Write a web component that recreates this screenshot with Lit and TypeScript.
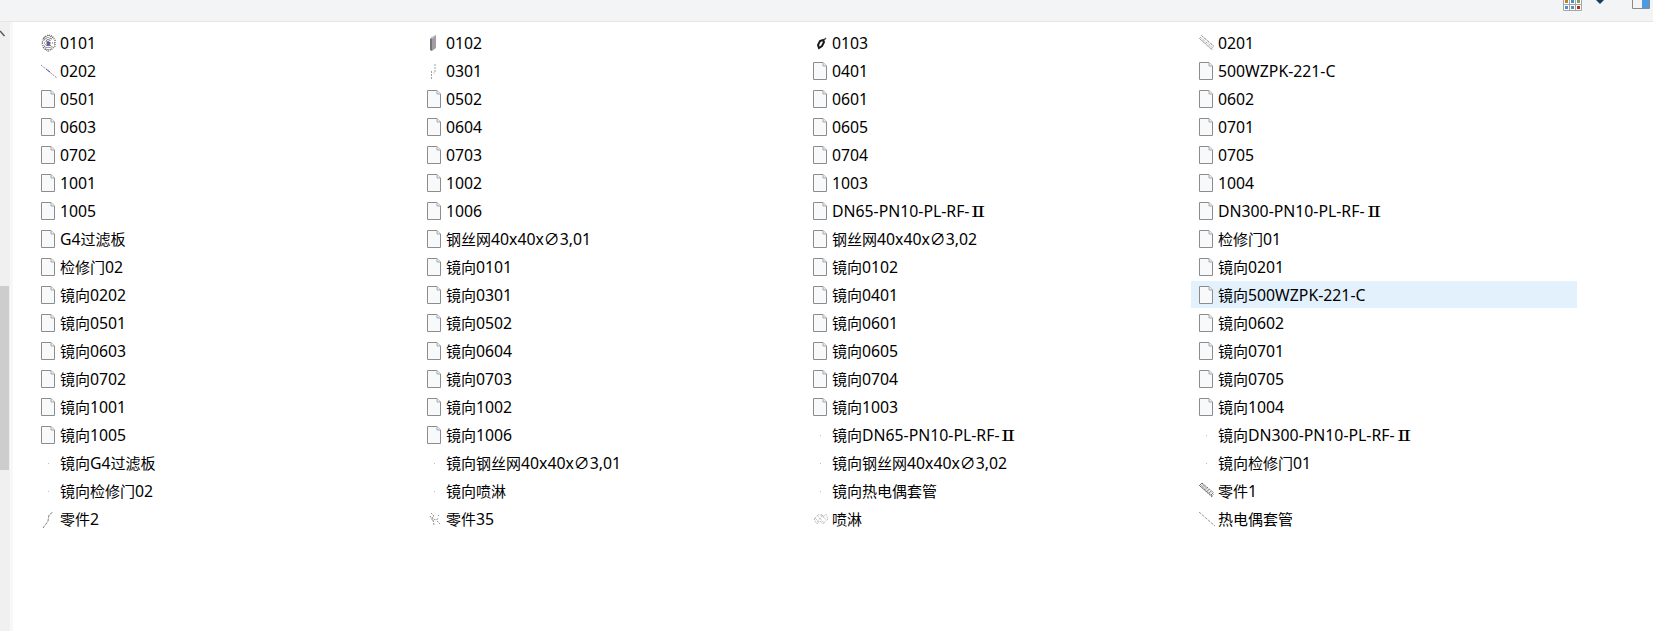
import { LitElement, html, svg, css } from 'lit';
import { customElement } from 'lit/decorators.js';

const FILE = svg`<path d="M.5.5h9.500l3.500 3.500v13.500h-13z" fill="#f8f9fb" stroke="#8c8c8c"/><path d="M10 .5v3.500h3.500" fill="#eceef0" stroke="#a8a8a8"/>`;
const DOT = svg`<rect x="7" y="9" width="1" height="1" fill="#b7b4e6"/>`;

// small previews of the 3D parts, only the ones that have a thumbnail
const THUMBS: Record<string, unknown> = {
  '0101': svg`<path d="M7 1v16M2 4l10 10M12 3L2 14M1 9h13M4 2l6 14M10 2L4 16" stroke="#666" stroke-width="1.200" stroke-dasharray="1 1"/><path d="M3 4l4-3 4 1 3 4v6l-3 3-4 2-4-3-2-5z" fill="none" stroke="#777" stroke-width="1.500" stroke-dasharray="1 1"/><rect x="6" y="8" width="3" height="3" fill="#5a5ac0"/>`,
  '0102': svg`<path d="M3 5l2-2v14l-2-1z" fill="#77707a"/><path d="M5 3l4-2v13l-4 3z" fill="#a39ca4"/><path d="M3 5l2-2 4-2-3 3z" fill="#cfcacf"/>`,
  '0103': svg`<path d="M6 14l-1-3 2-4 3-1 1 2-2 4z" fill="none" stroke="#1a1a1a" stroke-width="2"/><path d="M11 6l2-2" stroke="#444" stroke-width="1.500"/>`,
  '0201': svg`<path d="M1 3l13 11M2 1l13 12M1 5l12 11M3 2l12 10M0 4l14 12" stroke="#8e8e8e" stroke-dasharray="1 1"/>`,
  '0202': svg`<path d="M0 3l16 13" stroke="#8c8c9c" stroke-dasharray="2 1"/><path d="M5 7l4 3" stroke="#5c5cc8"/>`,
  '0301': svg`<path d="M4.500 9v8M8 2v9" fill="none" stroke="#a0a0a0" stroke-dasharray="2 1"/><path d="M6 10l2 2" stroke="#ccc"/>`,
  '零件1': svg`<path d="M1 2l13 12M2 1l13 12M1 4l12 11M3 1l12 10M0 3l14 12" stroke="#707070" stroke-dasharray="2 1"/>`,
  '零件2': svg`<path d="M2 18l3-4 2-3 1-6 4-3" fill="none" stroke="#7c7c7c" stroke-dasharray="3 1"/>`,
  '零件35': svg`<path d="M4 3l3 3-2 2 4 2 3-2M6 10l1 5M10 11l3 3M11 5l1 1M3 6l3 5" fill="none" stroke="#8a8a8a" stroke-dasharray="2 1"/>`,
  '喷淋': svg`<path d="M1 9l5-5 4 3 3-3 2 5-5 5-3-3-3 3zM4 5l7 8M10 5l-6 7M2 8l4 4M8 4l5 6" fill="none" stroke="#a8a8a8" stroke-dasharray="1 1"/>`,
  '热电偶套管': svg`<path d="M0 2l16 14" stroke="#999" stroke-dasharray="3 1"/>`,
};

const DOTTED = ['镜向G4过滤板', '镜向钢丝网40x40x∅3,01', '镜向钢丝网40x40x∅3,02', '镜向检修门01', '镜向检修门02', '镜向喷淋', '镜向热电偶套管', '镜向DN65-PN10-PL-RF-Ⅱ', '镜向DN300-PN10-PL-RF-Ⅱ'];

const NAMES = [
  '0101', '0102', '0103', '0201',
  '0202', '0301', '0401', '500WZPK-221-C',
  '0501', '0502', '0601', '0602',
  '0603', '0604', '0605', '0701',
  '0702', '0703', '0704', '0705',
  '1001', '1002', '1003', '1004',
  '1005', '1006', 'DN65-PN10-PL-RF-Ⅱ', 'DN300-PN10-PL-RF-Ⅱ',
  'G4过滤板', '钢丝网40x40x∅3,01', '钢丝网40x40x∅3,02', '检修门01',
  '检修门02', '镜向0101', '镜向0102', '镜向0201',
  '镜向0202', '镜向0301', '镜向0401', '镜向500WZPK-221-C',
  '镜向0501', '镜向0502', '镜向0601', '镜向0602',
  '镜向0603', '镜向0604', '镜向0605', '镜向0701',
  '镜向0702', '镜向0703', '镜向0704', '镜向0705',
  '镜向1001', '镜向1002', '镜向1003', '镜向1004',
  '镜向1005', '镜向1006', '镜向DN65-PN10-PL-RF-Ⅱ', '镜向DN300-PN10-PL-RF-Ⅱ',
  '镜向G4过滤板', '镜向钢丝网40x40x∅3,01', '镜向钢丝网40x40x∅3,02', '镜向检修门01',
  '镜向检修门02', '镜向喷淋', '镜向热电偶套管', '零件1',
  '零件2', '零件35', '喷淋', '热电偶套管',
];

@customElement('app-root')
export class AppRoot extends LitElement {
  static styles = css`
    :host {
      display: block;
      width: 1653px;
      height: 631px;
      overflow: hidden;
      background: #fff;
      font-family: "Noto Sans", "Noto Sans CJK SC", sans-serif;
      font-size: 15px;
      color: #000;
    }
    .toolbar {
      height: 22px;
      box-sizing: border-box;
      background: #f3f4f6;
      border-bottom: 1px solid #e6e6e6;
      display: flex;
      justify-content: flex-end;
      overflow: hidden;
    }
    .toolbar svg { display: block; }
    .tb-grid { margin-right: 14px; }
    .tb-chevron { margin-right: 28px; }
    .tb-panel { margin-right: 2px; }
    .main {
      display: flex;
      height: 609px;
    }
    .scroll {
      width: 10px;
      flex: none;
      background: #f0f0f0;
      border-right: 3px solid #f8f8f8;
      position: relative;
    }
    .scroll-up { position: absolute; left: 0; top: 8px; }
    .thumb {
      margin-top: 264px;
      height: 184px;
      width: 9px;
      background: #cdcdcd;
    }
    .grid {
      display: grid;
      grid-template-columns: repeat(4, 386px);
      grid-auto-rows: 27px;
      row-gap: 1px;
      padding: 7px 0 0 20px;
    }
    .item {
      display: flex;
      align-items: center;
      white-space: nowrap;
      padding-left: 8px;
      gap: 5px;
    }
    .item.sel { background: #e3f1fc; }
    .item svg { flex: none; display: block; }
    .lat { font-size: 15.8px; }
    .roman {
      display: inline-block;
      font-family: "DejaVu Serif", "DejaVu Sans", sans-serif;
      font-size: 15px;
      margin: 0 2px 0 4px;
      transform: scaleX(1.4);
    }
  `;

  private icon(name: string) {
    let body: unknown = FILE;
    if (THUMBS[name]) body = THUMBS[name];
    else if (DOTTED.includes(name)) body = DOT;
    return html`<svg width="14" height="18" viewBox="0 0 14 18" overflow="visible">${body}</svg>`;
  }

  // latin runs are a bit wider than the CJK ones in the original font
  private label(name: string) {
    const runs = name.match(/[\u4e00-\u9fff]+|Ⅱ|[^\u4e00-\u9fffⅡ]+/g) || [];
    return runs.map(r => {
      if (r === 'Ⅱ') return html`<span class="roman">${r}</span>`;
      if (/[\u4e00-\u9fff]/.test(r)) return html`<span>${r}</span>`;
      return html`<span class="lat">${r}</span>`;
    });
  }

  render() {
    return html`
      <div class="toolbar">
        <svg class="tb-grid" width="19" height="11" viewBox="0 0 19 11">
          <path d="M.5-6h18v16.500h-18zM6.500-6v16.500M12.500-6v16.500M.5 4.500h18" fill="#fff" stroke="#a5a5a5"/>
          <rect x="2" y="6" width="3" height="3" fill="#4a90d0"/><rect x="8" y="6" width="3" height="3" fill="#5f8fb0"/><rect x="14" y="6" width="3" height="3" fill="#c02818"/>
          <rect x="2" y="0" width="3" height="3" fill="#c08030"/><rect x="8" y="0" width="3" height="3" fill="#4a90d0"/><rect x="14" y="0" width="3" height="3" fill="#80a060"/>
        </svg>
        <svg class="tb-chevron" width="8" height="4" viewBox="0 0 8 4"><path d="M0 0h8l-4 4z" fill="#1f3b63"/></svg>
        <svg class="tb-panel" width="19" height="9" viewBox="0 0 19 9">
          <path d="M.5-2h17v10.500h-17z" fill="#f4f4f4" stroke="#8a8a8a"/>
          <rect x="10" y="-2" width="7" height="10" fill="#4a9be0"/>
        </svg>
      </div>
      <div class="main">
        <div class="scroll">
          <svg class="scroll-up" width="5" height="7" viewBox="0 0 5 7"><path d="M0 1l4.500 5" stroke="#555" stroke-width="1.500" fill="none"/></svg>
          <div class="thumb"></div>
        </div>
        <div class="grid">
          ${NAMES.map(n => html`
            <div class="item ${n === '镜向500WZPK-221-C' ? 'sel' : ''}">${this.icon(n)}<span>${this.label(n)}</span></div>
          `)}
        </div>
      </div>
    `;
  }
}
